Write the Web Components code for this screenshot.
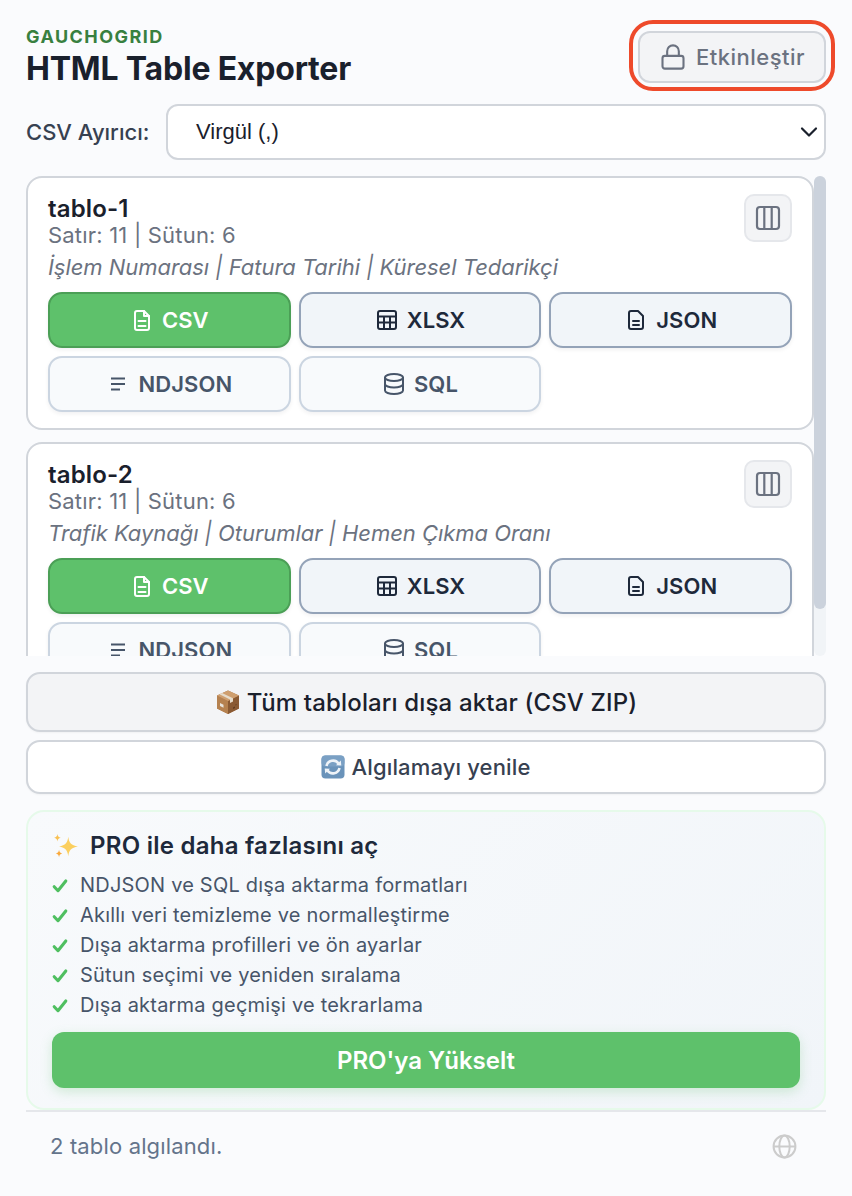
<!DOCTYPE html>
<html lang="tr"><head><meta charset="utf-8"><title>HTML Table Exporter</title>
<style>
html,body{margin:0;padding:0;background:#fafbfd}
body{font-family:Inter,"Noto Sans",sans-serif;width:852px;height:1196px;overflow:hidden}
</style></head><body>
<gg-app></gg-app>
<script>
const ICONS={
 csv:'<path d="M14 3H7a2 2 0 0 0-2 2v15a2 2 0 0 0 2 2h10a2 2 0 0 0 2-2V8z"/><path d="M14 3v5h5"/><path d="M8.5 13h7M8.5 18h7"/>',
 xlsx:'<rect x="3" y="3" width="18" height="18" rx="2"/><path d="M3 8.5h18M3 14.5h18M9 8.5V21M15 8.5V21"/>',
 json:'<path d="M14 3H7a2 2 0 0 0-2 2v14a2 2 0 0 0 2 2h10a2 2 0 0 0 2-2V8z"/><path d="M9 13h6M9 17h6"/>',
 ndjson:'<path d="M5 6.5h14M5 12h14M5 17.5h9"/>',
 sql:'<ellipse cx="12" cy="5.5" rx="9" ry="3.5"/><path d="M3 5.5v13c0 1.9 4 3.5 9 3.5s9-1.6 9-3.5v-13"/><path d="M3 12c0 1.9 4 3.5 9 3.5s9-1.6 9-3.5"/>'
};
const svg=(inner,size,sw=2)=>`<svg width="${size}" height="${size}" viewBox="0 0 24 24" fill="none" stroke="currentColor" stroke-width="${sw}" stroke-linecap="round" stroke-linejoin="round" aria-hidden="true">${inner}</svg>`;

class GGHeader extends HTMLElement{constructor(){super();this.attachShadow({mode:'open'}).innerHTML=`<style>
:host{display:flex;justify-content:space-between;align-items:flex-start;height:64px}
.brand{font-size:18px;line-height:20px;font-weight:650;letter-spacing:1.45px;color:#388040;margin-top:6px}
h1{margin:0;font-size:32px;line-height:38px;font-weight:700;color:#1a202c;letter-spacing:-.2px;margin-top:3px}
.wrap{position:relative;margin-top:10px}
button{font:500 22px/1 Inter,sans-serif;letter-spacing:.5px;box-sizing:border-box;display:flex;align-items:center;justify-content:center;gap:9px;width:188px;height:52px;border:2px solid #d1d5db;border-radius:12px;background:#f3f4f6;color:#6b7280;padding:0}
.ring{position:absolute;left:-9px;top:-11px;right:-9px;bottom:-8px;border:4.5px solid #ee4a2b;border-radius:24px;pointer-events:none}
</style><div><div class="brand">GAUCHOGRID</div><h1>HTML Table Exporter</h1></div>
<div class="wrap"><button>${svg('<rect x="3" y="11" width="18" height="11" rx="2"/><path d="M7 11V7a5 5 0 0 1 10 0v4"/>',28,1.8)}<span>Etkinleştir</span></button><div class="ring"></div></div>`}}
customElements.define('gg-header',GGHeader);

class GGSelect extends HTMLElement{constructor(){super();this.attachShadow({mode:'open'}).innerHTML=`<style>
:host{display:flex;align-items:center;height:56px;margin-top:19px;gap:16px}
label{flex:none;width:124px;font-size:22px;font-weight:500;color:#374151;white-space:nowrap}
.sel{flex:1;box-sizing:border-box;height:56px;border:2px solid #d1d5db;border-radius:12px;background:#fff;display:flex;align-items:center;justify-content:space-between;padding:0 6px 0 28px;font:400 22px "Liberation Sans",Arial,sans-serif;color:#1a202c}
</style><label>CSV Ayırıcı:</label><div class="sel"><span>Virgül (,)</span><svg width="18" height="12" viewBox="0 0 18 12" fill="none" stroke="#1a202c" stroke-width="2.2" stroke-linecap="round" stroke-linejoin="round"><path d="M2 2.5l7 7 7-7"/></svg></div>`}}
customElements.define('gg-select',GGSelect);

class GGExport extends HTMLElement{constructor(){super();const k=this.getAttribute('kind');
this.attachShadow({mode:'open'}).innerHTML=`<style>
:host{display:flex;box-sizing:border-box;height:56px;border-radius:14px;border:2px solid;align-items:center;justify-content:center;gap:8px;font-size:22px;font-weight:580;letter-spacing:.1px;box-shadow:0 2px 4px rgba(15,23,42,.06)}
:host([variant=primary]){background:#5ec16b;border-color:#4b9f56;color:#fff}
:host([variant=secondary]){background:#f1f5f9;border-color:#94a3b8;color:#1e293b}
:host([variant=muted]){background:#f8fafc;border-color:#cbd5e1;color:#475569}
svg{flex:none}
</style>${svg(ICONS[k],24,k==='ndjson'?1.9:2).replace('stroke-linecap="round"',k==='ndjson'?'stroke-linecap="butt"':'stroke-linecap="round"')}<slot></slot>`}}
customElements.define('gg-export',GGExport);

class GGCard extends HTMLElement{constructor(){super();this.attachShadow({mode:'open'}).innerHTML=`<style>
:host{display:block;box-sizing:border-box;height:254px;background:#fff;border:2px solid #d1d5db;border-radius:16px;padding:17px 20px 0;position:relative;margin-bottom:12px}
.top{display:flex;justify-content:space-between;height:97px}
.name{font-size:24px;line-height:28px;font-weight:600;color:#1a202c;letter-spacing:.15px}
.meta{font-size:22px;line-height:25px;color:#6b7280;letter-spacing:.2px}
.cols{font-size:22px;line-height:24px;font-style:italic;color:#6b7280;margin-top:7px;white-space:nowrap;letter-spacing:-.04px}
.ic{flex:none;box-sizing:border-box;width:48px;height:48px;margin-top:-1px;border:2px solid #e5e7eb;border-radius:10px;background:#f3f4f6;color:#6b7280;display:flex;align-items:center;justify-content:center}
.grid{display:grid;grid-template-columns:repeat(3,1fr);gap:8px}
</style><div class="top"><div><div class="name">${this.getAttribute('name')}</div><div class="meta">${this.getAttribute('meta')}</div><div class="cols">${this.getAttribute('cols')}</div></div>
<div class="ic"><svg width="26" height="26" viewBox="0 0 26 26" fill="none" stroke="currentColor" stroke-width="2.2" stroke-linejoin="round"><rect x="2" y="2" width="22" height="22" rx="3"/><path d="M9.3 2v22M16.7 2v22"/></svg></div></div>
<div class="grid"><gg-export kind="csv" variant="primary">CSV</gg-export><gg-export kind="xlsx" variant="secondary">XLSX</gg-export><gg-export kind="json" variant="secondary">JSON</gg-export><gg-export kind="ndjson" variant="muted">NDJSON</gg-export><gg-export kind="sql" variant="muted">SQL</gg-export></div>`}}
customElements.define('gg-card',GGCard);

class GGList extends HTMLElement{constructor(){super();this.attachShadow({mode:'open'}).innerHTML=`<style>
:host{display:flex;height:480px;margin-top:16px;overflow:hidden}
.scroll{flex:1;min-width:0;overflow:hidden}
.track{flex:none;width:12px;background:#f1f4f7;border-radius:6px}
.thumb{height:433px;background:#cbd2dc;border-radius:6px}
</style><div class="scroll"><slot></slot></div><div class="track"><div class="thumb"></div></div>`}}
customElements.define('gg-list',GGList);

const BOX=`<svg width="26" height="26" viewBox="0 0 26 26" aria-hidden="true"><path d="M13 1.5L24 6.5V19.5L13 25L2 19.5V6.5Z" fill="#a87448"/><path d="M13 12L24 6.5V19.5L13 25Z" fill="#8a5a33"/><path d="M2 6.5L13 12V25L2 19.5Z" fill="#b5814f"/><path d="M13 1.5L24 6.5L13 12L2 6.5Z" fill="#cf9f6f"/><path d="M7 4L18 9.3V12.5L15 14V10.6L4.5 5.3Z" fill="#e6dccb"/><path d="M5 14l3.5 1.8v3L5 17z" fill="#e8e4dc"/><path d="M18 18.5l2-1v1.5l-2 1zM20.5 15.5l1-.5v1l-1 .5z" fill="#5e3a1e"/></svg>`;
const SYNC=`<svg width="24" height="24" viewBox="0 0 24 24" aria-hidden="true"><rect x=".5" y=".5" width="23" height="23" rx="4" fill="#6a93ba"/><rect x=".5" y=".5" width="23" height="11" rx="4" fill="#7aa0c4"/><g fill="none" stroke="#eef3f8" stroke-width="2.6"><path d="M5.5 11a6.7 6.7 0 0 1 12-2.5"/><path d="M18.5 13a6.7 6.7 0 0 1-12 2.5"/></g><path d="M15 10.3L20.3 10.6 19.8 5.4Z" fill="#eef3f8"/><path d="M9 13.7L3.7 13.4 4.2 18.6Z" fill="#eef3f8"/></svg>`;
const SPARK=`<svg width="26" height="26" viewBox="0 0 24 24" aria-hidden="true"><path d="M15 3.5C15.8 9.3 17.5 11.2 24 12.5 17.5 13.8 15.8 15.7 15 21.5 14.2 15.7 12.5 13.8 6.5 12.5 12.5 11.2 14.2 9.3 15 3.5Z" fill="#fbcf5e"/><path d="M5 1C5.3 3.2 6 3.9 8 4.4 6 4.9 5.3 5.6 5 7.8 4.7 5.6 4 4.9 2 4.4 4 3.9 4.7 3.2 5 1Z" fill="#f9c152"/><path d="M6.5 15.5C6.8 17.7 7.5 18.4 9.5 18.9 7.5 19.4 6.8 20.1 6.5 22.3 6.2 20.1 5.5 19.4 3.5 18.9 5.5 18.4 6.2 17.7 6.5 15.5Z" fill="#f9a93c"/></svg>`;

class GGAction extends HTMLElement{constructor(){super();this.attachShadow({mode:'open'}).innerHTML=`<style>
:host{display:flex;box-sizing:border-box;border:2px solid #d1d5db;border-radius:14px;align-items:center;justify-content:center;gap:6px;box-shadow:0 1px 2px rgba(0,0,0,.04)}
:host([main]){height:60px;background:#f3f4f6;font-size:24px;font-weight:500;color:#1a202c;margin-top:16px;letter-spacing:.15px}
:host(:not([main])){height:54px;background:#fff;font-size:22px;font-weight:500;color:#374151;margin-top:8px;letter-spacing:.15px}
</style><slot name="ico"></slot><span><slot></slot></span>`}}
customElements.define('gg-action',GGAction);

class GGPro extends HTMLElement{constructor(){super();const items=['NDJSON ve SQL dışa aktarma formatları','Akıllı veri temizleme ve normalleştirme','Dışa aktarma profilleri ve ön ayarlar','Sütun seçimi ve yeniden sıralama','Dışa aktarma geçmişi ve tekrarlama'];
this.attachShadow({mode:'open'}).innerHTML=`<style>
:host{display:block;box-sizing:border-box;height:300px;margin-top:16px;border:2px solid #e6faea;border-radius:18px;background:linear-gradient(135deg,#f8fafc,#f1f5f9);padding:18px 24px 0}
.t{display:flex;align-items:center;gap:12px;font-size:24px;line-height:32px;font-weight:600;color:#1e293b;letter-spacing:.25px}
ul{list-style:none;margin:8px 0 0;padding:0}
li{display:flex;align-items:center;gap:12px;height:30px;font-size:20px;color:#475569;letter-spacing:.2px}
li svg{flex:none;margin-top:1px}
.b{box-sizing:border-box;height:56px;margin-top:12px;border-radius:12px;background:#5ec16b;color:#fff;font-size:24px;font-weight:600;display:flex;align-items:center;justify-content:center;box-shadow:0 4px 12px rgba(94,193,107,.25)}
</style><div class="t">${SPARK}<span>PRO ile daha fazlasını aç</span></div>
<ul>${items.map(i=>`<li><svg width="16" height="16" viewBox="0 0 16 16" fill="none" stroke="#4fbf60" stroke-width="3.1" stroke-linecap="round" stroke-linejoin="round"><path d="M2.2 8.7l3.8 4 7.8-9.7"/></svg><span>${i}</span></li>`).join('')}</ul>
<div class="b">PRO'ya Yükselt</div>`}}
customElements.define('gg-pro',GGPro);

class GGFooter extends HTMLElement{constructor(){super();this.attachShadow({mode:'open'}).innerHTML=`<style>
:host{display:flex;align-items:center;justify-content:space-between;box-sizing:border-box;height:70px;border-top:2px solid #e5e7eb;padding:0 29px 0 24px;font-size:22px;color:#64748b;letter-spacing:.15px}
svg{color:#ccc}
</style><span>2 tablo algılandı.</span><svg width="25" height="25" viewBox="0 0 24 24" fill="none" stroke="currentColor" stroke-width="1.9"><circle cx="12" cy="12" r="10.5"/><path d="M1.5 12h21"/><ellipse cx="12" cy="12" rx="5" ry="10.5"/></svg>`}}
customElements.define('gg-footer',GGFooter);

class GGApp extends HTMLElement{constructor(){super();this.attachShadow({mode:'open'}).innerHTML=`<style>
:host{display:block;box-sizing:border-box;width:852px;padding:21px 26px 0}
</style><gg-header></gg-header><gg-select></gg-select>
<gg-list><gg-card name="tablo-1" meta="Satır: 11 | Sütun: 6" cols="İşlem Numarası | Fatura Tarihi | Küresel Tedarikçi"></gg-card><gg-card name="tablo-2" meta="Satır: 11 | Sütun: 6" cols="Trafik Kaynağı | Oturumlar | Hemen Çıkma Oranı"></gg-card></gg-list>
<gg-action main><span slot="ico" style="display:flex">${BOX}</span>Tüm tabloları dışa aktar (CSV ZIP)</gg-action>
<gg-action><span slot="ico" style="display:flex">${SYNC}</span>Algılamayı yenile</gg-action>
<gg-pro></gg-pro><gg-footer></gg-footer>`}}
customElements.define('gg-app',GGApp);
</script></body></html>
